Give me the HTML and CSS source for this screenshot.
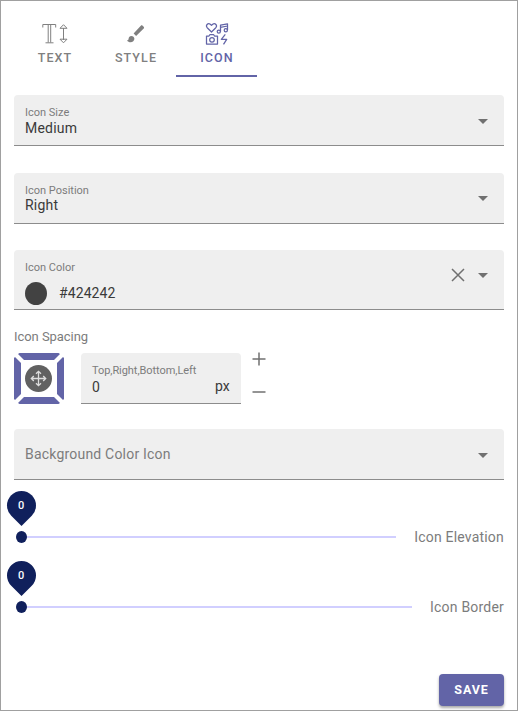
FILE: index.html
```html
<!DOCTYPE html>
<html lang="en">
<head>
<meta charset="utf-8">
<title>Icon settings</title>
<link rel="stylesheet" href="styles.css">
</head>
<body>
<main class="panel">
  <nav class="tabs">
    <a class="tab">
      <svg class="tab-icon" width="26" height="24" viewBox="0 0 26 24" fill="none" stroke="currentColor" stroke-width="1">
        <path d="M.8 5.5V2.5H13.7V5.5M6.2 2.5V20.5M8.7 2.5V20.5M3.5 20.8H11.5M21.5 6V18M18 6.3L21.5 2.7L25 6.3ZM18 17.2L21.5 20.8L25 17.2Z"/>
      </svg>
      <span>TEXT</span>
    </a>
    <a class="tab">
      <svg class="tab-icon" width="20" height="24" viewBox="0 0 20 24" fill="currentColor">
        <path d="M5.4 14C3.8 14 2.600 15.200 2.600 16.700C2.600 18 1.700 18.300 1 18.400C1.800 19.500 3.200 20.200 4.500 20.200C6.700 20.200 8.400 18.600 8.400 16.700C8.400 15.200 7 14 5.400 14ZM17.700 4.800L16.600 3.700C16.100 3.200 15.300 3.200 14.800 3.700L7.600 11.600L10.100 14L17.700 6.600C18.200 6.100 18.200 5.300 17.700 4.800Z"/>
      </svg>
      <span>STYLE</span>
    </a>
    <a class="tab tab-active">
      <svg class="tab-icon" width="24" height="24" viewBox="0 0 24 24" fill="none" stroke="currentColor" stroke-width="1.25" stroke-linejoin="round">
        <path d="M6.500 10L2.200 5.700C.3 3.600 2.800 .4 5.300 2.200L6.500 3.400L7.700 2.200C10.200 .4 12.700 3.600 10.800 5.700Z"/>
        <path d="M15.500 9.500V3.100L22.500 1.800V8.100M15.500 5.300L22.500 4"/>
        <circle cx="13.800" cy="9.600" r="1.600"/><circle cx="20.800" cy="8.300" r="1.600"/>
        <path d="M1.500 14H4L5 12.500H8.500L9.500 14H12.500V22H1.500Z"/>
        <circle cx="7" cy="17.800" r="2.300"/>
        <path d="M20.300 12.300L16.300 17.300H21.700L18.500 22.400"/>
      </svg>
      <span>ICON</span>
    </a>
  </nav>

  <section class="field field-size">
    <div class="field-body"><span class="label">Icon Size</span><span class="value">Medium</span></div>
    <i class="caret"></i>
  </section>
  <section class="field field-position">
    <div class="field-body"><span class="label">Icon Position</span><span class="value">Right</span></div>
    <i class="caret"></i>
  </section>
  <section class="field field-color">
    <div class="field-body">
      <span class="label">Icon Color</span>
      <span class="color-value"><i class="swatch"></i><span class="value">#424242</span></span>
    </div>
    <svg class="clear" width="14" height="14" viewBox="0 0 14 14" stroke="currentColor" stroke-width="1.500"><path d="M1 1L13 13M13 1L1 13"/></svg>
    <i class="caret"></i>
  </section>

  <h2 class="spacing-title">Icon Spacing</h2>
  <section class="spacing">
    <svg class="sides" width="50" height="51" viewBox="0 0 50 51">
      <g fill="#6264a7">
        <path d="M5.500 0H44.500L46 1L40 7H10L4 1Z"/>
        <path d="M10 44H40L46 50L44.500 51H5.500L4 50Z"/>
        <path d="M0 5L1 4L7 10V41L1 47L0 46Z"/>
        <path d="M50 5L49 4L43 10V41L49 47L50 46Z"/>
      </g>
      <circle cx="24.500" cy="25.500" r="13.500" fill="#616161"/>
      <path d="M24.500 18.500V32.500M17.500 25.500H31.500M22 20.800L24.500 18.300L27 20.800M22 30.200L24.500 32.700L27 30.200M19.800 23L17.300 25.500L19.800 28M29.200 23L31.700 25.500L29.200 28" fill="none" stroke="#ddd" stroke-width="1.300"/>
    </svg>
    <div class="field field-spacing">
      <div class="field-body"><span class="label">Top,Right,Bottom,Left</span><span class="value">0</span></div>
      <span class="value unit">px</span>
    </div>
    <div class="stepper">
      <svg width="14" height="14" viewBox="0 0 14 14" stroke="currentColor" stroke-width="1.500"><path d="M.5 7H13.500M7 .5V13.500"/></svg>
      <svg width="14" height="14" viewBox="0 0 14 14" stroke="currentColor" stroke-width="1.500"><path d="M.5 7H13.500"/></svg>
    </div>
  </section>

  <section class="field field-background">
    <span class="placeholder">Background Color Icon</span>
    <i class="caret"></i>
  </section>

  <section class="slider">
    <div class="track"><div class="thumb"></div><div class="bubble"><span>0</span></div></div>
    <span class="slider-label">Icon Elevation</span>
  </section>
  <section class="slider">
    <div class="track"><div class="thumb"></div><div class="bubble"><span>0</span></div></div>
    <span class="slider-label">Icon Border</span>
  </section>

  <button class="save">SAVE</button>
</main>
</body>
</html>
```
FILE: styles.css
```css
* { box-sizing: border-box; }
body { margin: 0; font-family: Roboto, sans-serif; background: #fff; color: #333; }
.panel {
  width: 518px; height: 711px;
  display: flex; flex-direction: column;
  padding: 0 13px;
  border: 1px solid #a0a0a0;
}
.tabs { display: flex; height: 76px; margin-bottom: 18px; flex: none; }
.tab {
  width: 81px; padding-top: 21px;
  display: flex; flex-direction: column; align-items: center;
  font-size: 12.5px; line-height: 15px; font-weight: 500; letter-spacing: 1.1px;
  color: #808080;
}
.tab span { margin: 4px 0 0 1px; }
.tab-active { color: #6264a7; border-bottom: 2px solid #6264a7; }
.tab-icon { display: block; flex: none; margin-left: 1px; }
.field {
  flex: none; display: flex; align-items: center;
  height: 51px; padding: 0 16px 0 11px;
  background: #efefef; border-bottom: 1px solid #8c8c8c;
  border-radius: 4px 4px 0 0;
}
.field-body { flex: 1; align-self: flex-start; display: flex; flex-direction: column; }
.label { margin-top: 11px; font-size: 11px; line-height: 14px; color: #7c7c7c; }
.value { font-size: 14px; line-height: 18px; letter-spacing: .2px; color: #3a3a3a; }
.field-size .value { margin-top: -1px; }
.field-size .caret, .field-background .caret { margin-top: 2px; }
.field-position { margin-top: 27px; }
.field-position .value { margin-top: -2px; }
.field-color { margin-top: 26px; height: 60px; }
.field-color .caret { margin-top: -9px; }
.color-value { display: flex; align-items: center; margin-top: 7px; gap: 12px; }
.color-value .value { margin-top: -1px; letter-spacing: .1px; }
.swatch { width: 22px; height: 23px; border-radius: 50%; background: #424242; }
.clear { margin: -9px 13px 0 0; color: #707070; }
.caret {
  width: 0; height: 0;
  border: solid transparent; border-width: 5px 5px 0; border-top-color: #707070;
}
.spacing-title {
  margin: 19px 0 8px; font-size: 13px; line-height: 16px; font-weight: 400;
  letter-spacing: -.05px; color: #7c7c7c;
}
.spacing { display: flex; flex: none; height: 51px; }
.sides { margin-right: 17px; flex: none; }
.field-spacing { width: 160px; padding-right: 11px; }
.field-spacing .label { letter-spacing: -.06px; }
.unit { margin-top: 16px; }
.stepper { display: flex; flex-direction: column; gap: 19px; margin: -1px 0 0 11px; color: #707070; }
.field-background { margin-top: 25px; }
.placeholder { flex: 1; font-size: 14px; letter-spacing: .2px; color: #7c7c7c; }
.slider { display: flex; align-items: center; height: 20px; margin-top: 50px; flex: none; }
.field-background + .slider { margin-top: 47px; }
.track { position: relative; flex: 1; height: 2px; margin: 0 18px 0 7px; background: #d1cfff; }
.thumb { position: absolute; left: -5px; top: -5px; width: 11px; height: 12px; border-radius: 50%; background: #10205c; }
.bubble {
  position: absolute; left: -14.500px; top: -45px; width: 29px; height: 29px;
  border-radius: 50% 50% 0 50%; transform: rotate(45deg); background: #10205c;
  display: flex; align-items: center; justify-content: center;
}
.bubble span { transform: rotate(-45deg); color: #fff; font-size: 11px; font-weight: 500; }
.slider-label { font-size: 14px; letter-spacing: .2px; color: #7c7c7c; }
.save {
  align-self: flex-end; width: 65px; height: 32px; margin-top: 57px; padding: 0 0 2px; flex: none;
  border: 0; border-radius: 4px; background: #6264a7; color: #fff;
  font: 700 12.5px Roboto, sans-serif; letter-spacing: .9px;
  box-shadow: 0 2px 3px rgba(0, 0, 0, .35);
}
```
